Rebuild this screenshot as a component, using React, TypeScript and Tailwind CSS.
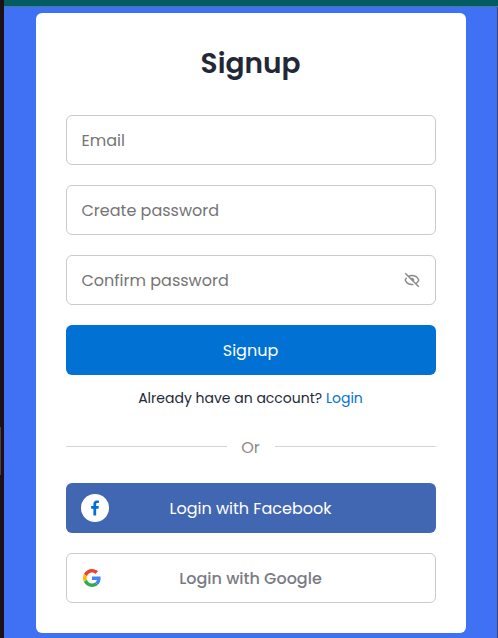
import React from 'react';
import { BiHide, BiLogoFacebook } from 'react-icons/bi';

function GoogleMark() {
  return (
    <svg viewBox="0 0 48 48" className="mx-px size-[18px] shrink-0" aria-hidden="true">
      <path fill="#EA4335" d="M24 9.5c3.54 0 6.71 1.22 9.21 3.6l6.85-6.85C35.9 2.38 30.47 0 24 0 14.62 0 6.51 5.38 2.56 13.22l7.98 6.19C12.43 13.72 17.74 9.5 24 9.5z" />
      <path fill="#4285F4" d="M46.98 24.55c0-1.57-.15-3.09-.38-4.55H24v9.02h12.94c-.58 2.96-2.26 5.48-4.78 7.18l7.73 6c4.51-4.18 7.09-10.36 7.09-17.65z" />
      <path fill="#FBBC05" d="M10.53 28.59c-.48-1.45-.76-2.99-.76-4.59s.27-3.14.76-4.59l-7.98-6.19C.92 16.46 0 20.12 0 24c0 3.88.92 7.54 2.56 10.78l7.97-6.19z" />
      <path fill="#34A853" d="M24 48c6.48 0 11.93-2.13 15.89-5.81l-7.73-6c-2.15 1.45-4.92 2.3-8.16 2.3-6.26 0-11.57-4.22-13.47-9.91l-7.98 6.19C6.51 42.62 14.62 48 24 48z" />
    </svg>
  );
}

function Field({ label, secret }: { label: string; secret?: boolean }) {
  return (
    <div className="flex h-[50px] items-center rounded-md border border-[#cacaca] px-[14.5px]">
      <input
        placeholder={label}
        className="min-w-0 flex-1 bg-transparent pt-0.5 text-base text-[#232836] outline-none placeholder:text-[#757575]"
      />
      {secret && <BiHide className="size-[18px] shrink-0 text-[#8b8b8b]" />}
    </div>
  );
}

export default function App() {
  return (
    <div className="flex h-[638px] w-[498px] flex-col overflow-hidden bg-[#4070f4] font-['Poppins','Inter',sans-serif]">
      <div className="flex flex-1">
        <div className="flex w-1 shrink-0 flex-col bg-[#1e0e16]">
          <div className="mt-[427px] h-12 w-px bg-[#4b4446]" />
        </div>
        <div className="flex flex-1 flex-col">
          <div className="h-[7px] border-b border-[#417d9b] bg-[#055c60]" />
          <div className="flex flex-1 justify-between">
            <main className="ml-8 mt-1.5 h-[620px] w-[430px] rounded-md bg-white p-[30px]">
              <h1 className="pr-px text-center text-[28px] font-semibold leading-[42px] text-[#232836]">Signup</h1>
              <form className="mt-[30px] flex flex-col gap-5">
                <Field label="Email" />
                <Field label="Create password" />
                <Field label="Confirm password" secret />
                <button type="button" className="h-[50px] rounded-md bg-[#0171d3] pr-px pt-0.5 text-base text-white">
                  Signup
                </button>
              </form>
              <p className="mt-[12px] pr-px text-center text-sm leading-[22px] text-[#232836]">
                <span>Already have an account?</span> <a className="text-[#0171d3]">Login</a>
              </p>
              <div className="mt-[26px] flex h-6 items-center text-[#8b8b8b]">
                <div className="mb-px h-px flex-1 bg-[#d4d4d4]" />
                <span className="w-12 pr-px pt-0.5 text-center text-base">Or</span>
                <div className="mb-px h-px flex-1 bg-[#d4d4d4]" />
              </div>
              <button type="button" className="mt-6 flex h-[50px] w-full items-center rounded-md bg-[#4267b2] px-[15px] text-white">
                <span className="flex size-7 items-center justify-center rounded-full bg-white pr-px">
                  <BiLogoFacebook className="size-5 text-[#0171d3]" />
                </span>
                <span className="flex-1 pr-[29px] pt-0.5 text-base">Login with Facebook</span>
              </button>
              <button type="button" className="mt-5 flex h-[50px] w-full items-center rounded-md border border-[#cacaca] px-[15px] text-[#7a7b84]">
                <GoogleMark />
                <span className="flex-1 pr-[21px] pt-0.5 text-base font-medium">Login with Google</span>
              </button>
            </main>
            <div className="w-px bg-[#41436a]" />
          </div>
        </div>
      </div>
    </div>
  );
}
